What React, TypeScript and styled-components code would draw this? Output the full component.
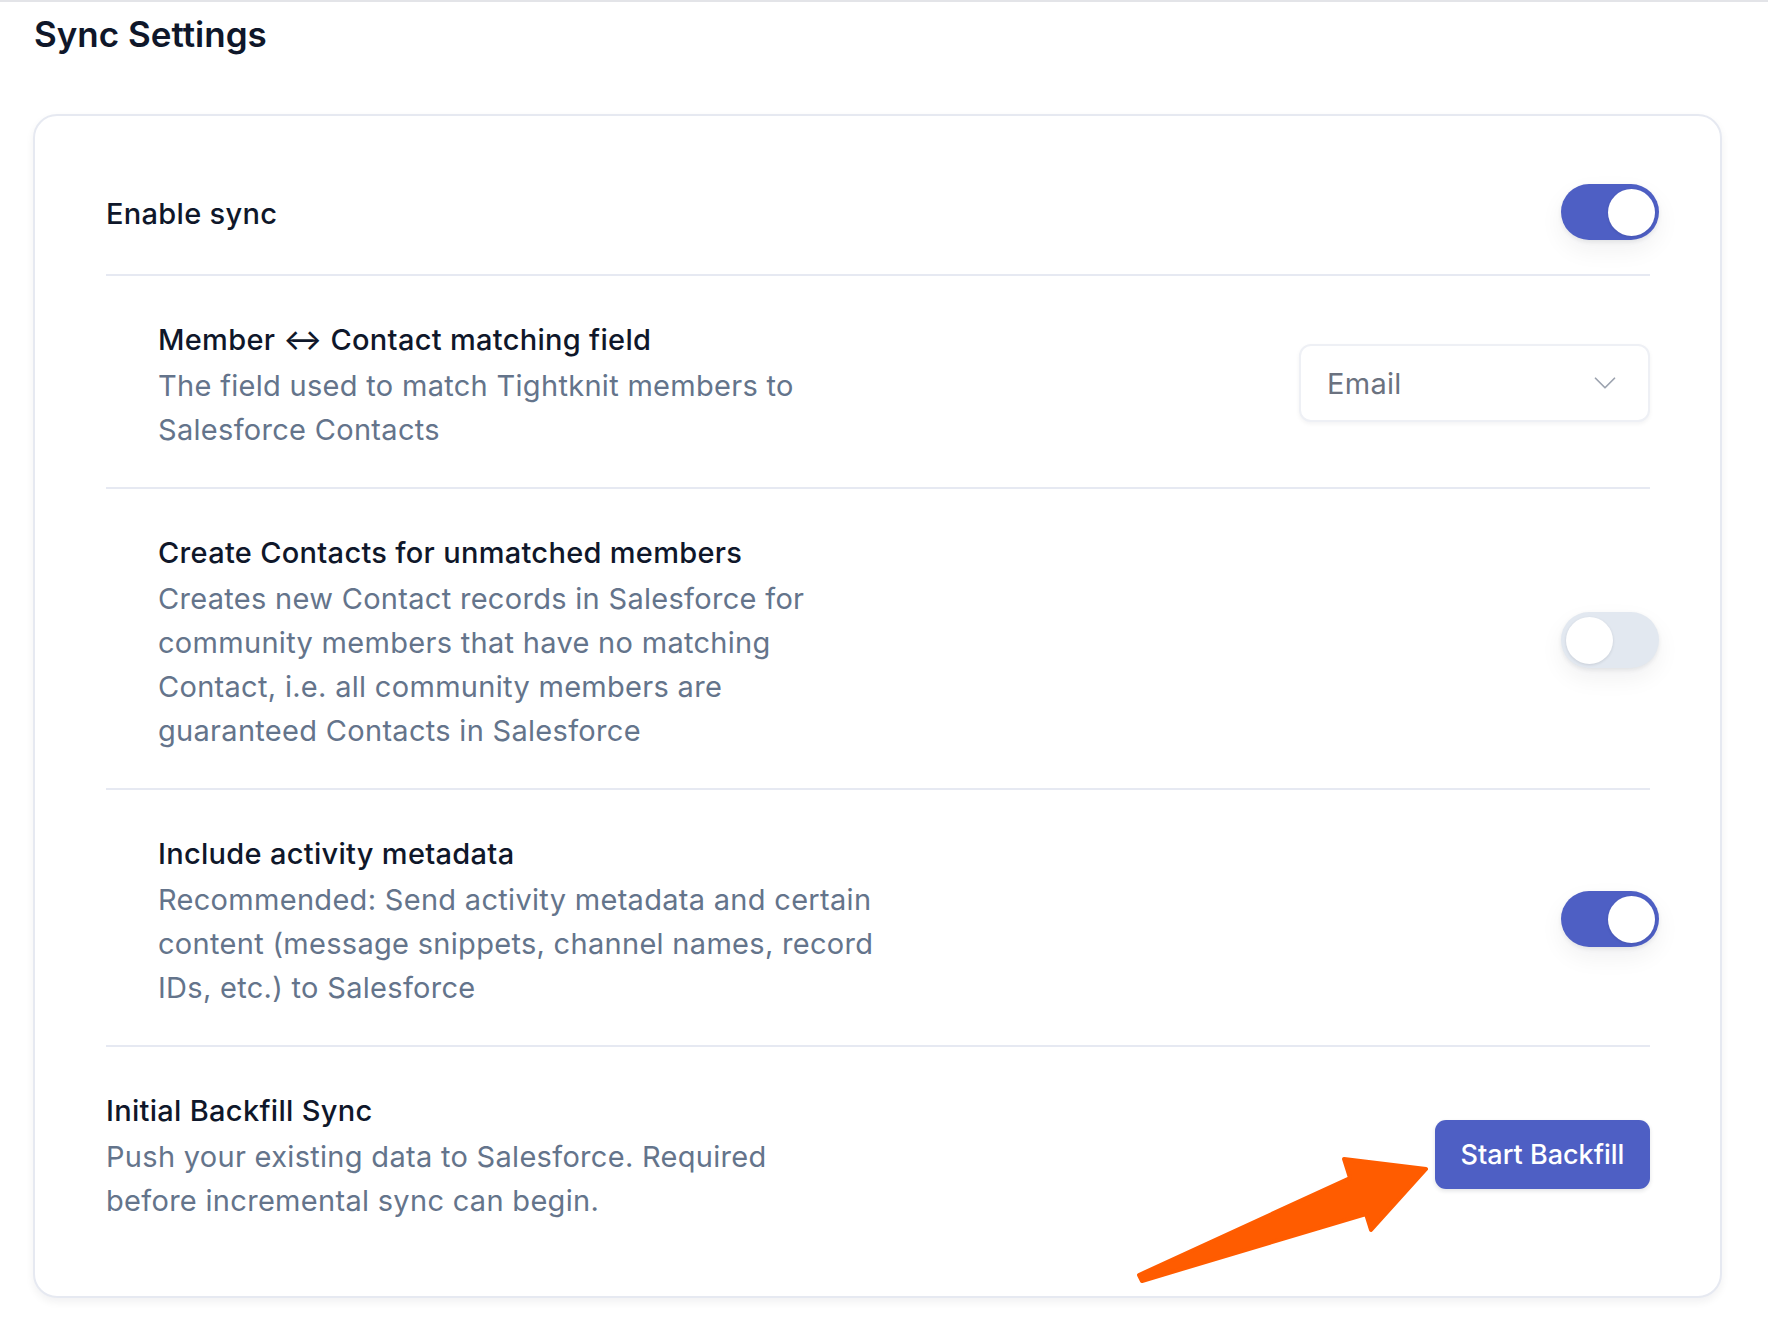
import React from "react";
import styled, { createGlobalStyle } from "styled-components";
import { ChevronDown } from "lucide-react";

const Global = createGlobalStyle`
  html, body { margin: 0; padding: 0; background: #ffffff; }
  body { font-family: Inter, "Noto Sans", "Liberation Sans", sans-serif; -webkit-font-smoothing: antialiased; }
  * { box-sizing: border-box; }
`;

const Page = styled.div`
  position: relative;
  width: 1768px;
  min-height: 1331px;
  border-top: 2px solid #e3e4e8;
  padding: 12px 46px 0 33px;
`;

const Heading = styled.h1`
  margin: 0 0 60px 1px;
  font-size: 35px;
  line-height: 40px;
  font-weight: 600;
  color: #0f172a;
  letter-spacing: 0;
`;

const Card = styled.section`
  border: 2px solid #e6e9f1;
  border-radius: 24px;
  background: #fff;
  box-shadow: 0 4px 8px rgba(15, 23, 42, 0.06);
  padding: 27px 70px 38px 71px;
  display: flex;
  flex-direction: column;
`;

const Row = styled.div<{ $indent?: boolean; $last?: boolean; $compact?: boolean }>`
  display: flex;
  align-items: center;
  justify-content: space-between;
  gap: 40px;
  padding: ${(p) => (p.$compact ? "41px 0 30px" : "42px 0 35px")};
  padding-left: ${(p) => (p.$indent ? "52px" : "0")};
  border-bottom: ${(p) => (p.$last ? "none" : "2px solid #e6e9f2")};
`;

const TextCol = styled.div`
  display: flex;
  flex-direction: column;
  gap: 2px;
  max-width: 760px;
`;

const Title = styled.div`
  font-size: 29px;
  line-height: 44px;
  font-weight: 500;
  letter-spacing: 0.3px;
  color: #0f172a;
`;

const Desc = styled.div`
  font-size: 29px;
  line-height: 44px;
  font-weight: 400;
  letter-spacing: 0.3px;
  color: #64748b;
`;

const Track = styled.button<{ $on: boolean }>`
  position: relative;
  flex: none;
  width: 98px;
  height: 56px;
  margin: 0 -9px 4px 0;
  border: none;
  border-radius: 28px;
  padding: 0;
  cursor: pointer;
  background: ${(p) => (p.$on ? "#4e5fc4" : "#e2e8f0")};
  box-shadow: 0 10px 24px rgba(15, 23, 42, 0.06), 0 2px 4px rgba(15, 23, 42, 0.08);
`;

const Knob = styled.span<{ $on: boolean }>`
  position: absolute;
  top: 4.5px;
  left: ${(p) => (p.$on ? "46.5px" : "4.5px")};
  width: 47px;
  height: 47px;
  border-radius: 50%;
  background: #ffffff;
  box-shadow: 0 1px 3px rgba(15, 23, 42, 0.12);
`;

const Select = styled.div`
  flex: none;
  width: 351px;
  height: 78px;
  margin-bottom: 4px;
  display: flex;
  align-items: center;
  justify-content: space-between;
  padding: 0 24px 0 26px;
  border: 2px solid #eef0f5;
  border-radius: 12px;
  background: #fff;
  box-shadow: 0 2px 4px rgba(15, 23, 42, 0.05);
  font-size: 29px;
  letter-spacing: 0.3px;
  color: #6b7280;
`;

const Button = styled.button`
  flex: none;
  width: 215px;
  height: 69px;
  margin-bottom: 4px;
  border: none;
  border-radius: 11px;
  background: #4e5fc4;
  color: #ffffff;
  font-family: inherit;
  font-size: 27px;
  font-weight: 500;
  cursor: pointer;
  box-shadow: 0 2px 4px rgba(15, 23, 42, 0.12);
`;

const ArrowLayer = styled.svg`
  position: absolute;
  left: 0;
  top: 0;
  pointer-events: none;
`;

const Toggle = ({ on }: { on: boolean }) => (
  <Track $on={on} aria-pressed={on}>
    <Knob $on={on} />
  </Track>
);

export default function App() {
  return (
    <>
      <Global />
      <Page>
        <Heading>Sync Settings</Heading>
        <Card>
          <Row $compact>
            <Title>Enable sync</Title>
            <Toggle on />
          </Row>
          <Row $indent>
            <TextCol>
              <Title>Member ↔ Contact matching field</Title>
              <Desc>
                The field used to match Tightknit members to
                <br />
                Salesforce Contacts
              </Desc>
            </TextCol>
            <Select>
              <span>Email</span>
              <ChevronDown size={38} strokeWidth={1.1} color="#9ca3af" />
            </Select>
          </Row>
          <Row $indent>
            <TextCol>
              <Title>Create Contacts for unmatched members</Title>
              <Desc>
                Creates new Contact records in Salesforce for
                <br />
                community members that have no matching
                <br />
                Contact, i.e. all community members are
                <br />
                guaranteed Contacts in Salesforce
              </Desc>
            </TextCol>
            <Toggle on={false} />
          </Row>
          <Row $indent>
            <TextCol>
              <Title>Include activity metadata</Title>
              <Desc>
                Recommended: Send activity metadata and certain
                <br />
                content (message snippets, channel names, record
                <br />
                IDs, etc.) to Salesforce
              </Desc>
            </TextCol>
            <Toggle on />
          </Row>
          <Row $last>
            <TextCol>
              <Title>Initial Backfill Sync</Title>
              <Desc>
                Push your existing data to Salesforce. Required
                <br />
                before incremental sync can begin.
              </Desc>
            </TextCol>
            <Button>Start Backfill</Button>
          </Row>
        </Card>
        <ArrowLayer width="1768" height="1331" viewBox="0 0 1768 1331">
          <polygon
            points="1426,1167 1344,1157 1350,1176 1139,1273 1142,1279 1366,1212 1371,1228"
            fill="#ff5c00"
            stroke="#ff5c00"
            strokeWidth="4"
            strokeLinejoin="round"
          />
        </ArrowLayer>
      </Page>
    </>
  );
}
